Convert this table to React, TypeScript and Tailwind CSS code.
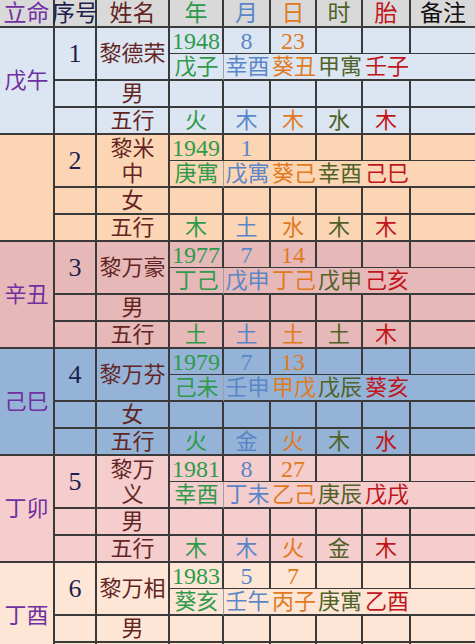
import React from "react";

type Group = {
  ming: string;
  no: string;
  name: string[];
  gender: string;
  nums: string[];
  gz: string[];
  wx: string[];
  bg: string;
};

const groups: Group[] = [
  { ming: "戊午", no: "1", name: ["黎德荣"], gender: "男", nums: ["1948", "8", "23", "", ""], gz: ["戊子", "幸酉", "葵丑", "甲寓", "壬子"], wx: ["火", "木", "木", "水", "木"], bg: "bg-[#dce6f2]" },
  { ming: "", no: "2", name: ["黎米", "中"], gender: "女", nums: ["1949", "1", "", "", ""], gz: ["庚寓", "戊寓", "葵己", "幸酉", "己巳"], wx: ["木", "土", "水", "木", "木"], bg: "bg-[#fcd5b5]" },
  { ming: "辛丑", no: "3", name: ["黎万豪"], gender: "男", nums: ["1977", "7", "14", "", ""], gz: ["丁己", "戊申", "丁己", "戊申", "己亥"], wx: ["土", "土", "土", "土", "木"], bg: "bg-[#e6b9b8]" },
  { ming: "己巳", no: "4", name: ["黎万芬"], gender: "女", nums: ["1979", "7", "13", "", ""], gz: ["己未", "壬申", "甲戊", "戊辰", "葵亥"], wx: ["火", "金", "火", "木", "水"], bg: "bg-[#95b3d7]" },
  { ming: "丁卯", no: "5", name: ["黎万", "义"], gender: "男", nums: ["1981", "8", "27", "", ""], gz: ["幸酉", "丁未", "乙己", "庚辰", "戊戌"], wx: ["木", "木", "火", "金", "木"], bg: "bg-[#f5cdcd]" },
  { ming: "丁酉", no: "6", name: ["黎万相"], gender: "男", nums: ["1983", "5", "7", "", ""], gz: ["葵亥", "壬午", "丙子", "庚寓", "乙酉"], wx: ["", "", "", "", ""], bg: "bg-[#fde6d6]" },
];

// column colours: 年 月 日 时 胎
const tint = ["text-[#2f9a4c]", "text-[#5a86c8]", "text-[#e07a1f]", "text-[#4f6228]", "text-[#c0151b]"];

const cols = "grid grid-cols-[55px_42px_73px_54px_47px_46px_46px_48px_64px]";
const line = "border-[#3a3a3a]";
const center = "flex items-center justify-center";

function GroupRows({ g }: { g: Group }) {
  return (
    <div className={`${cols} grid-rows-[26px_27px_27px_25px] border-b-2 ${line} ${g.bg}`}>
      <div className={`col-start-1 row-start-1 row-span-4 border-r-2 ${line} ${center} text-[#7030a0]`}>{g.ming}</div>
      <div className={`col-start-2 row-start-1 row-span-2 border-r-2 border-b-2 ${line} ${center} text-[26px] text-[#1f1f4d]`}>{g.no}</div>
      <div className={`col-start-3 row-start-1 row-span-2 border-r-2 border-b-2 ${line} flex flex-col items-center justify-center leading-[25px] text-[#632523]`}>
        {g.name.map((n) => (
          <span key={n}>{n}</span>
        ))}
      </div>

      {/* numbers */}
      {g.nums.map((n, i) => (
        <div key={"n" + i} className={`row-start-1 border-r-2 border-b ${line} ${center} text-[24px] leading-none ${tint[i]}`}>
          {n}
        </div>
      ))}
      <div className={`row-start-1 border-b ${line}`} />

      {/* stems & branches */}
      {g.gz.map((n, i) => (
        <div
          key={"g" + i}
          className={`row-start-2 border-b-2 ${i === 0 ? "border-r border-r-[#9aa0a8]" : ""} ${line} ${center} whitespace-nowrap ${tint[i]}`}
        >
          {n}
        </div>
      ))}
      <div className={`row-start-2 border-b-2 ${line}`} />

      {/* gender */}
      <div className={`col-start-2 row-start-3 border-r-2 border-b-2 ${line}`} />
      <div className={`col-start-3 row-start-3 border-r-2 border-b-2 ${line} ${center} text-[#632523]`}>{g.gender}</div>
      {[0, 1, 2, 3, 4].map((i) => (
        <div key={"e" + i} className={`row-start-3 border-r-2 border-b-2 ${line}`} />
      ))}
      <div className={`row-start-3 border-b-2 ${line}`} />

      {/* five elements */}
      <div className={`col-start-2 row-start-4 border-r-2 ${line}`} />
      <div className={`col-start-3 row-start-4 border-r-2 ${line} ${center} text-[#632523]`}>五行</div>
      {g.wx.map((n, i) => (
        <div key={"w" + i} className={`row-start-4 border-r-2 ${line} ${center} ${tint[i]}`}>
          {n}
        </div>
      ))}
      <div className="row-start-4" />
    </div>
  );
}

export default function App() {
  const head = [
    { t: "立命", c: "text-[#7030a0]" },
    { t: "序号", c: "text-[#1f1f4d]" },
    { t: "姓名", c: "text-[#632523]" },
    { t: "年", c: tint[0] },
    { t: "月", c: tint[1] },
    { t: "日", c: tint[2] },
    { t: "时", c: tint[3] },
    { t: "胎", c: tint[4] },
    { t: "备注", c: "text-[#111111]" },
  ];

  return (
    <div className="w-[475px] h-[644px] overflow-hidden bg-white font-['Liberation_Serif','Noto_Sans_CJK_SC',serif] text-[22px]">
      <div className={`${cols} h-[28px] bg-[#d9d9d9] border-b-2 ${line} text-[23px]`}>
        {head.map((h, i) => (
          <div key={h.t} className={`${i < 8 ? "border-r-2" : ""} ${line} ${center} whitespace-nowrap leading-none ${h.c}`}>
            {h.t}
          </div>
        ))}
      </div>
      {groups.map((g) => (
        <GroupRows key={g.no} g={g} />
      ))}
    </div>
  );
}
